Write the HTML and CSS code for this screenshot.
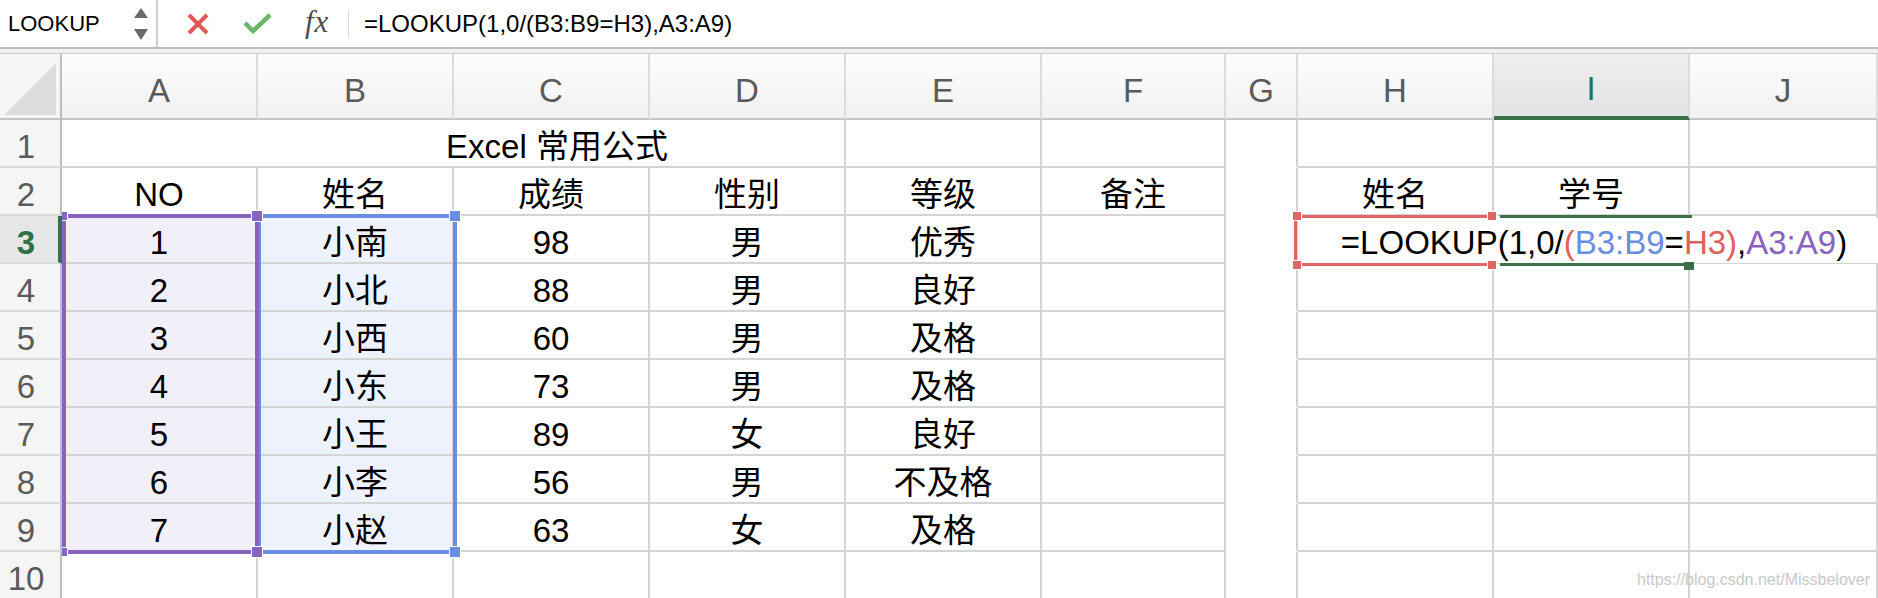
FILE: index.html
```html
<!doctype html>
<html>
<head>
<meta charset="utf-8">
<link rel="stylesheet" href="styles.css">
</head>
<body>
<div class="toolbar">
	<div class="namebox">
		<span>LOOKUP</span>
		<svg class="spin" width="14" height="32" viewBox="0 0 14 32"><path d="M7 0 L14 10 L0 10 Z M0 21 L14 21 L7 32 Z" fill="#6a6a6a"/></svg>
	</div>
	<svg class="ico cancel" width="22" height="22" viewBox="0 0 22 22"><path d="M2 2 L20 20 M20 2 L2 20" stroke="#dc5b57" stroke-width="4" stroke-linecap="butt"/></svg>
	<svg class="ico enter" width="29" height="21" viewBox="0 0 29 21"><path d="M2 10 L10 18 L27 2" stroke="#6cb767" stroke-width="4.5" fill="none"/></svg>
	<span class="fx">fx</span>
	<span class="bar"></span>
	<span class="formula">=LOOKUP(1,0/(B3:B9=H3),A3:A9)</span>
</div>
<div class="strip"></div>

<div class="sheet">
	<!-- column headers -->
	<div class="corner"><i></i></div>
	<div class="ch">A</div><div class="ch">B</div><div class="ch">C</div><div class="ch">D</div><div class="ch">E</div>
	<div class="ch">F</div><div class="ch">G</div><div class="ch">H</div><div class="ch on">I</div><div class="ch">J</div>

	<div class="rh">1</div><div class="c title">Excel 常用公式</div><div class="c"></div><div class="c"></div><div class="c g"></div><div class="c"></div><div class="c"></div><div class="c"></div>

	<div class="rh">2</div><div class="c">NO</div><div class="c">姓名</div><div class="c">成绩</div><div class="c">性别</div><div class="c">等级</div><div class="c">备注</div><div class="c g"></div><div class="c">姓名</div><div class="c">学号</div><div class="c"></div>

	<div class="rh on">3</div><div class="c a">1</div><div class="c b">小南</div><div class="c">98</div><div class="c">男</div><div class="c">优秀</div><div class="c"></div><div class="c g"></div><div class="c"></div><div class="c"></div><div class="c"></div>

	<div class="rh">4</div><div class="c a">2</div><div class="c b">小北</div><div class="c">88</div><div class="c">男</div><div class="c">良好</div><div class="c"></div><div class="c g"></div><div class="c"></div><div class="c"></div><div class="c"></div>

	<div class="rh">5</div><div class="c a">3</div><div class="c b">小西</div><div class="c">60</div><div class="c">男</div><div class="c">及格</div><div class="c"></div><div class="c g"></div><div class="c"></div><div class="c"></div><div class="c"></div>

	<div class="rh">6</div><div class="c a">4</div><div class="c b">小东</div><div class="c">73</div><div class="c">男</div><div class="c">及格</div><div class="c"></div><div class="c g"></div><div class="c"></div><div class="c"></div><div class="c"></div>

	<div class="rh">7</div><div class="c a">5</div><div class="c b">小王</div><div class="c">89</div><div class="c">女</div><div class="c">良好</div><div class="c"></div><div class="c g"></div><div class="c"></div><div class="c"></div><div class="c"></div>

	<div class="rh">8</div><div class="c a">6</div><div class="c b">小李</div><div class="c">56</div><div class="c">男</div><div class="c">不及格</div><div class="c"></div><div class="c g"></div><div class="c"></div><div class="c"></div><div class="c"></div>

	<div class="rh">9</div><div class="c a">7</div><div class="c b">小赵</div><div class="c">63</div><div class="c">女</div><div class="c">及格</div><div class="c"></div><div class="c g"></div><div class="c"></div><div class="c"></div><div class="c"></div>

	<div class="rh">10</div><div class="c"></div><div class="c"></div><div class="c"></div><div class="c"></div><div class="c"></div><div class="c"></div><div class="c g"></div><div class="c"></div><div class="c"></div><div class="c"></div>

	<!-- reference ranges -->
	<div class="range range-b"></div>
	<div class="range range-a"></div>
	<span class="knob kb1"></span><span class="knob kb2"></span>
	<span class="knob ka1"></span><span class="knob ka2"></span><span class="knob ka3"></span><span class="knob ka4"></span>

	<!-- cell being edited -->
	<div class="editor"><span>=LOOKUP(1,0/<b class="red">(</b><b class="blue">B3:B9</b>=<b class="red">H3)</b>,<b class="purple">A3:A9</b>)</span></div>
	<div class="range range-h"></div>
	<span class="knob kh1"></span><span class="knob kh2"></span><span class="knob kh3"></span><span class="knob kh4"></span>
	<div class="active-top"></div>
	<div class="active-bottom"></div>
	<span class="fill-handle"></span>

	<div class="mark">https://blog.csdn.net/Missbelover</div>
</div>
</body>
</html>
```

FILE: styles.css
```css
html, body{
	margin: 0;
	width: 100%;
	height: 100%;
	overflow: hidden;
	background: #fff;
}
body{
	font-family: "Liberation Sans", "Noto Sans CJK SC", sans-serif;
	color: #000;
}

/* formula bar */
.toolbar{
	height: 47px;
	display: flex;
	align-items: center;
	border-bottom: 2px solid #bdbdbd;
}
.namebox{
	width: 148px;
	height: 100%;
	box-sizing: content-box;
	padding: 0 8px 0 0;
	border-right: 2px solid #cfcfcf;
	display: flex;
	align-items: center;
	justify-content: space-between;
	font-size: 22px;
}
.namebox span{
	padding-left: 8px;
}
.cancel{ margin-left: 29px; }
.enter{ margin-left: 34px; }
.fx{
	margin-left: 33px;
	width: 28px;
	font-family: "Liberation Serif", serif;
	font-style: italic;
	font-size: 31px;
	letter-spacing: 1px;
	color: #4d4d4d;
	line-height: 1;
	padding-bottom: 4px;
}
.bar{
	margin-left: 15px;
	width: 1px;
	height: 28px;
	background: #d9d9d9;
}
.formula{
	margin-left: 15px;
	font-size: 24px;
}
.strip{
	height: 4px;
	background: #f0f0f0;
	border-bottom: 1px solid #cbcbcb;
}

/* grid */
.sheet{
	position: relative;
	display: grid;
	grid-template-columns: 62px 196px 196px 196px 196px 196px 184px 72px 196px 196px 188px;
	grid-template-rows: 66px repeat(10, 48px);
}
.sheet > div{
	box-sizing: border-box;
}
.corner{
	background: #f5f5f5;
	border-right: 2px solid #bdbdbd;
	border-bottom: 2px solid #c4c4c4;
	display: flex;
	align-items: flex-end;
	justify-content: flex-end;
	padding: 0 4px 3px 0;
}
.corner i{
	width: 52px;
	height: 52px;
	background: #dcdcdc;
	clip-path: polygon(100% 0, 100% 100%, 0 100%);
}
.ch{
	background: linear-gradient(#fdfdfd, #f1f1f1);
	border-right: 2px solid #dcdcdc;
	border-bottom: 2px solid #c4c4c4;
	display: flex;
	align-items: center;
	justify-content: center;
	padding-top: 9px;
	font-size: 33px;
	line-height: 1;
	color: #5a5a5a;
}
.ch.on{
	background: linear-gradient(#efefef, #e3e3e3);
	border-bottom: 4px solid #3a7048;
	color: #2f7044;
	padding-top: 7px;
}
.rh{
	background: #f5f5f5;
	border-right: 2px solid #bdbdbd;
	border-bottom: 2px solid #dadada;
	display: flex;
	align-items: center;
	justify-content: center;
	padding: 7px 8px 0 0;
	font-size: 33px;
	line-height: 1;
	color: #5a5a5a;
}
.rh.on{
	background: #e6e6e6;
	border-right: 4px solid #3a7048;
	color: #2f7044;
	font-weight: bold;
	padding-right: 6px;
}
.c{
	border-right: 2px solid #d4d4d4;
	border-bottom: 2px solid #d4d4d4;
	display: flex;
	align-items: center;
	justify-content: center;
	padding-top: 7px;
	font-size: 33px;
	line-height: 1;
	white-space: nowrap;
}
.c.title{
	grid-column: span 4;
	padding-left: 208px;
}
.c.g{
	border-bottom-color: #fff;
}
.c.a{ background: #f1eff8; }
.c.b{ background: #eef2fc; }

/* highlighted ranges */
.range{
	position: absolute;
	box-sizing: border-box;
}
.range-a{
	left: 62px; top: 160px;
	width: 197px; height: 340px;
	border: 4px solid #8a63c0;
}
.range-b{
	left: 257px; top: 160px;
	width: 200px; height: 340px;
	border: 4px solid #6a8fe1;
}
.range-h{
	left: 1294px; top: 161px;
	width: 202px; height: 51px;
	border: 3px solid #dc6861;
	border-right: none;
}
.knob{
	position: absolute;
	width: 10px;
	height: 10px;
	box-sizing: border-box;
	border: 1px solid #fff;
}
.ka1, .ka2, .ka3, .ka4{ background: #8a63c0; }
.kb1, .kb2{ background: #6a8fe1; }
.ka1{ left: 62px; top: 157px; width: 6px; border-left: none; }
.ka2{ left: 251px; top: 156px; width: 12px; height: 12px; }
.ka3{ left: 62px; top: 493px; width: 6px; border-left: none; }
.ka4{ left: 251px; top: 492px; width: 12px; height: 12px; }
.kb1{ left: 449px; top: 156px; width: 12px; height: 12px; }
.kb2{ left: 449px; top: 492px; width: 12px; height: 12px; }
.kh1, .kh2, .kh3, .kh4{ background: #dc6861; }
.kh1{ left: 1292px; top: 157px; }
.kh2{ left: 1487px; top: 157px; }
.kh3{ left: 1292px; top: 206px; }
.kh4{ left: 1487px; top: 206px; }

.editor{
	position: absolute;
	left: 1299px; top: 164px;
	width: 590px; height: 45px;
	background: #fff;
	display: flex;
	align-items: center;
	justify-content: center;
	padding-top: 4px;
	font-size: 33px;
	line-height: 1;
	white-space: nowrap;
}
.editor b{ font-weight: normal; }
.red{ color: #dd625b; }
.blue{ color: #6a8fe1; }
.purple{ color: #8a63c0; }

.active-top, .active-bottom{
	position: absolute;
	left: 1500px;
	height: 3px;
	background: #3a7048;
}
.active-top{ top: 161px; width: 192px; }
.active-bottom{ top: 209px; width: 186px; }
.fill-handle{
	position: absolute;
	left: 1684px; top: 208px;
	width: 10px; height: 8px;
	background: #3a7048;
}

.mark{
	position: absolute;
	left: 1637px; top: 517px;
	font-size: 16px;
	color: #c9c9c9;
	white-space: nowrap;
}
```
